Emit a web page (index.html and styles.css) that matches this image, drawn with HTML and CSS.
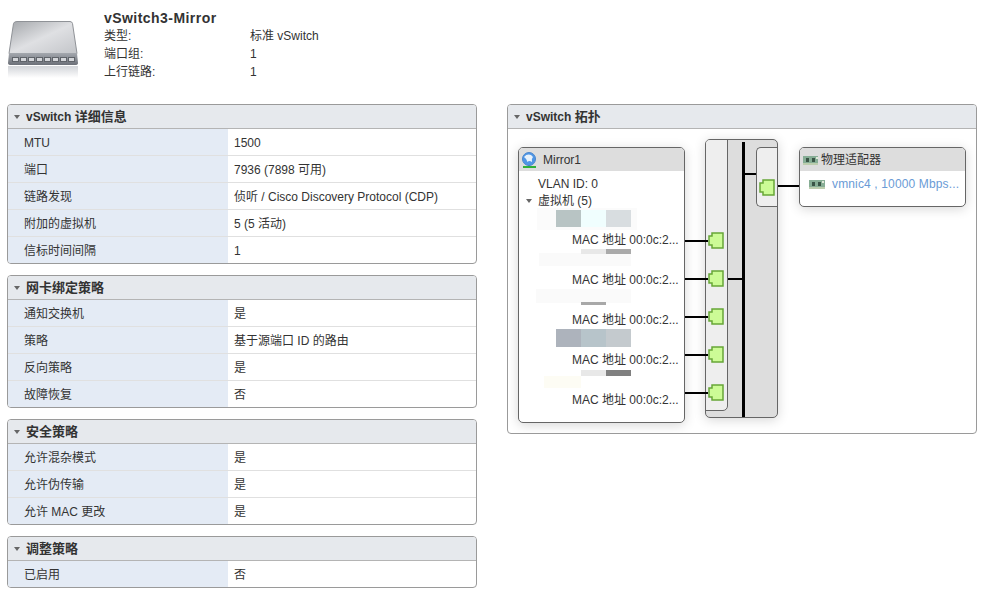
FILE: index.html
```html
<!DOCTYPE html>
<html lang="zh">
<head>
<meta charset="utf-8">
<title>vSwitch3-Mirror</title>
<link rel="stylesheet" href="styles.css">
</head>
<body>
<svg width="0" height="0" class="defs">
  <defs>
    <g id="port">
      <path d="M4 1H15V16H4V13H1V4H4Z" fill="#ccfb96" stroke="#67a637" stroke-width="1.500"/>
    </g>
    <g id="nic">
      <rect x="0" y="1" width="16" height="9" fill="#86ad95"/>
      <rect x="0" y="8" width="16" height="2" fill="#bccdae"/>
      <rect x="3" y="3" width="3" height="4" fill="#3a5546"/>
      <rect x="9" y="3" width="3" height="4" fill="#3a5546"/>
      <rect x="13" y="2" width="2" height="2" fill="#dfe8d8"/>
    </g>
  </defs>
</svg>
<header class="summary">
  <svg class="switch-icon" width="70" height="58" viewBox="0 0 70 58">
    <defs>
      <linearGradient id="top" x1="0" y1="0" x2="1" y2="1">
        <stop offset="0" stop-color="#a3a6aa"/>
        <stop offset=".5" stop-color="#dfe0e3"/>
        <stop offset="1" stop-color="#c3c5c9"/>
      </linearGradient>
      <linearGradient id="band" x1="0" y1="0" x2="0" y2="1">
        <stop offset="0" stop-color="#a4a8ae"/>
        <stop offset="1" stop-color="#6c7078"/>
      </linearGradient>
      <linearGradient id="refl" x1="0" y1="0" x2="0" y2="1">
        <stop offset="0" stop-color="#d2d5d9"/>
        <stop offset="1" stop-color="#ffffff"/>
      </linearGradient>
    </defs>
    <path d="M9 1.500H62Q64 1.500 64.500 3.500L69 33.500H1L5.500 3.500Q6 1.500 9 1.500Z" fill="url(#top)" stroke="#8f9297"/>
    <path d="M1 33H69L70 43Q70 45 67 45H3Q0 45 0 43Z" fill="url(#band)"/>
    <g fill="#d4d6da" stroke="#60646a">
      <rect x="4.500" y="37.500" width="6" height="4"/><rect x="12.500" y="37.500" width="6" height="4"/>
      <rect x="20.500" y="37.500" width="6" height="4"/><rect x="28.500" y="37.500" width="6" height="4"/>
      <rect x="36.500" y="37.500" width="6" height="4"/><rect x="44.500" y="37.500" width="6" height="4"/>
      <rect x="52.500" y="37.500" width="6" height="4"/><rect x="60.500" y="37.500" width="6" height="4"/>
    </g>
    <rect x="0" y="46" width="70" height="12" fill="url(#refl)"/>
  </svg>
  <div class="summary-text">
    <h1>vSwitch3-Mirror</h1>
    <dl class="facts">
      <dt>类型:</dt><dd>标准 vSwitch</dd>
      <dt>端口组:</dt><dd>1</dd>
      <dt>上行链路:</dt><dd>1</dd>
    </dl>
  </div>
</header>
<main class="columns">
  <div class="column">
    <section class="panel">
      <h2 class="panel-head"><i class="caret"></i>vSwitch&nbsp;<span class="zh">详细信息</span></h2>
      <div class="row"><span class="key">MTU</span><span class="val">1500</span></div>
      <div class="row"><span class="key">端口</span><span class="val">7936 (7898 可用)</span></div>
      <div class="row"><span class="key">链路发现</span><span class="val">侦听 / Cisco Discovery Protocol (CDP)</span></div>
      <div class="row"><span class="key">附加的虚拟机</span><span class="val">5 (5 活动)</span></div>
      <div class="row"><span class="key">信标时间间隔</span><span class="val">1</span></div>
    </section>
    <section class="panel">
      <h2 class="panel-head"><i class="caret"></i><span class="zh">网卡绑定策略</span></h2>
      <div class="row"><span class="key">通知交换机</span><span class="val">是</span></div>
      <div class="row"><span class="key">策略</span><span class="val">基于源端口 ID 的路由</span></div>
      <div class="row"><span class="key">反向策略</span><span class="val">是</span></div>
      <div class="row"><span class="key">故障恢复</span><span class="val">否</span></div>
    </section>
    <section class="panel">
      <h2 class="panel-head"><i class="caret"></i><span class="zh">安全策略</span></h2>
      <div class="row"><span class="key">允许混杂模式</span><span class="val">是</span></div>
      <div class="row"><span class="key">允许伪传输</span><span class="val">是</span></div>
      <div class="row"><span class="key">允许 MAC 更改</span><span class="val">是</span></div>
    </section>
    <section class="panel">
      <h2 class="panel-head"><i class="caret"></i><span class="zh">调整策略</span></h2>
      <div class="row"><span class="key">已启用</span><span class="val">否</span></div>
    </section>
  </div>
  <div class="column">
    <section class="panel">
      <h2 class="panel-head"><i class="caret"></i>vSwitch&nbsp;<span class="zh">拓扑</span></h2>
      <div class="canvas">
        <div class="card portgroup">
          <div class="card-head">
            <svg class="globe" width="16" height="16" viewBox="0 0 16 16">
              <rect x="7" y="12" width="2" height="3" fill="#556"/>
              <circle cx="8" cy="7" r="6.500" fill="#4f96e6" stroke="#4a86cc"/>
              <path d="M3 5Q6 1.500 10 3L12 5Q10 7 11 10Q8 8 6.500 10Q6 7 3 5Z" fill="#e6f1fb"/>
              <rect x="2" y="14" width="13" height="2" fill="#2fb03a"/>
            </svg>
            <span>Mirror1</span>
          </div>
          <div class="card-body">
            <div class="vlan">VLAN ID: 0</div>
            <div class="vm-title"><i class="caret"></i>虚拟机 (5)</div>
            <div class="vm"><span class="mac">MAC 地址 00:0c:2...</span></div>
            <div class="vm"><span class="mac">MAC 地址 00:0c:2...</span></div>
            <div class="vm"><span class="mac">MAC 地址 00:0c:2...</span></div>
            <div class="vm"><span class="mac">MAC 地址 00:0c:2...</span></div>
            <div class="vm"><span class="mac">MAC 地址 00:0c:2...</span></div>
          </div>
          <i class="smudge s1d"></i>
          <i class="smudge s1a"></i><i class="smudge s1b"></i><i class="smudge s1c"></i>
          <i class="smudge s2c"></i><i class="smudge s2a"></i><i class="smudge s2b"></i>
          <i class="smudge s3a"></i><i class="smudge s3b"></i>
          <i class="smudge s4a"></i><i class="smudge s4b"></i><i class="smudge s4c"></i>
          <i class="smudge s5a"></i><i class="smudge s5b"></i><i class="smudge s5c"></i>
        </div>
        <div class="vswitch">
          <div class="strip">
            <svg class="port" width="16" height="17"><use href="#port"/></svg>
            <svg class="port trunk" width="16" height="17"><use href="#port"/></svg>
            <svg class="port" width="16" height="17"><use href="#port"/></svg>
            <svg class="port" width="16" height="17"><use href="#port"/></svg>
            <svg class="port" width="16" height="17"><use href="#port"/></svg>
          </div>
          <i class="bus"></i>
          <i class="link-left"></i>
          <i class="link-right"></i>
          <div class="uplink"><svg width="16" height="17"><use href="#port"/></svg></div>
        </div>
        <i class="wire w1"></i><i class="wire w2"></i><i class="wire w3"></i><i class="wire w4"></i><i class="wire w5"></i>
        <i class="wire w6"></i>
        <div class="card adapter">
          <div class="card-head">
            <svg width="15" height="10"><use href="#nic"/></svg>
            <span>物理适配器</span>
          </div>
          <div class="nic-row">
            <svg width="16" height="10"><use href="#nic"/></svg>
            <span class="nic-name">vmnic4 , 10000 Mbps...</span>
          </div>
        </div>
      </div>
    </section>
  </div>
</main>
</body>
</html>
```
FILE: styles.css
```css
* { box-sizing: border-box; }
html, body { margin: 0; padding: 0; background: #fff; }
body {
  width: 984px;
  height: 594px;
  overflow: hidden;
  font: 12px/18px "Liberation Sans", "Noto Sans CJK SC", sans-serif;
  color: #333;
}
.defs { position: absolute; }
.summary {
  height: 104px;
  display: flex;
  padding: 20px 0 0 8px;
}
.switch-icon { flex: none; }
.summary-text { margin: -11px 0 0 26px; }
h1 {
  margin: 0;
  font-size: 14px;
  font-weight: bold;
  line-height: 18px;
  letter-spacing: .45px;
  color: #333;
}
.facts {
  margin: 0;
  display: grid;
  grid-template-columns: 146px auto;
  grid-auto-rows: 18px;
}
.facts dt, .facts dd { margin: 0; }
.columns {
  display: flex;
  gap: 30px;
  padding-left: 7px;
  align-items: flex-start;
}
.column {
  width: 470px;
  display: flex;
  flex-direction: column;
  gap: 11px;
}
.panel {
  border: 1px solid #9a9a9a;
  border-radius: 4px;
  overflow: hidden;
  background: #fff;
}
.panel-head {
  margin: 0;
  height: 24px;
  display: flex;
  align-items: center;
  padding: 1px 0 0 6px;
  background: #e6e9ed;
  border-bottom: 1px solid #b4b4b4;
  font-size: 12px;
  font-weight: bold;
  color: #333;
}
.zh { font-size: 13px; }
.caret {
  flex: none;
  width: 0;
  height: 0;
  margin-right: 6px;
  border: 3.5px solid transparent;
  border-top: 4px solid #666;
  border-bottom: 0;
}
.row {
  height: 27px;
  display: grid;
  grid-template-columns: 220px 1fr;
  border-bottom: 1px solid #e0e0e0;
}
.row:last-child { height: 26px; border-bottom: 0; }
.key, .val { display: flex; align-items: center; padding-top: 1px; }
.key { background: #e4ebf5; padding-left: 16px; }
.val { padding-left: 6px; }

.canvas {
  position: relative;
  height: 304px;
}
.card {
  position: absolute;
  background: #fff;
  border: 1px solid #666;
  border-radius: 5px;
  box-shadow: 0 2px 12px rgba(0, 0, 0, .16);
  overflow: hidden;
}
.card-head {
  height: 23px;
  padding-top: 1px;
  display: flex;
  align-items: center;
  background: #ddd;
}
.portgroup { left: 10px; top: 18px; width: 167px; height: 276px; }
.portgroup .card-head { padding-left: 2px; gap: 6px; }
.globe { flex: none; }
.card-body { padding-left: 19px; }
.vlan { height: 17px; margin-top: 4px; }
.vm-title { height: 18px; margin-bottom: -1px; display: flex; align-items: center; margin-left: -12px; }
.vm-title .caret { margin-right: 6px; }
.vm { height: 40px; display: flex; align-items: flex-end; padding-left: 34px; white-space: nowrap; }
.smudge { position: absolute; filter: blur(.6px); }
.s1d { left: 18px; top: 60px; width: 100px; height: 22px; background: #fbfbfb; }
.s1a { left: 37px; top: 62px; width: 25px; height: 17px; background: #b8c4c4; }
.s1b { left: 62px; top: 62px; width: 25px; height: 17px; background: #f0fefe; }
.s1c { left: 87px; top: 62px; width: 25px; height: 17px; background: #d8dde0; }
.s2a { left: 62px; top: 101px; width: 25px; height: 5px; background: #e8e8e8; }
.s2b { left: 87px; top: 101px; width: 25px; height: 5px; background: #aaa; }
.s2c { left: 20px; top: 105px; width: 92px; height: 13px; background: #fafafa; }
.s3a { left: 17px; top: 141px; width: 95px; height: 14px; background: #fafafa; }
.s3b { left: 62px; top: 154px; width: 25px; height: 3px; background: #a8a8a8; }
.s4a { left: 37px; top: 181px; width: 25px; height: 18px; background: #adb3bc; }
.s4b { left: 62px; top: 181px; width: 25px; height: 18px; background: #b7c4ca; }
.s4c { left: 87px; top: 181px; width: 25px; height: 18px; background: #c4cace; }
.s5a { left: 62px; top: 222px; width: 25px; height: 6px; background: #e8e8e8; }
.s5b { left: 87px; top: 222px; width: 25px; height: 6px; background: #808080; }
.s5c { left: 25px; top: 228px; width: 37px; height: 12px; background: #fdfcf4; }

.vswitch {
  position: absolute;
  left: 197px;
  top: 10px;
  width: 73px;
  height: 279px;
  background: #ddd;
  border: 1px solid #666;
  border-radius: 5px;
  box-shadow: 0 2px 12px rgba(0, 0, 0, .16);
  overflow: hidden;
}
.strip {
  position: absolute;
  left: -1px;
  top: -1px;
  width: 23px;
  height: 272px;
  padding: 92px 0 0 2px;
  display: flex;
  flex-direction: column;
  gap: 21px;
  background: #eee;
  border: 1px solid #666;
  border-radius: 0 0 5px 0;
}
.strip .port { flex: none; }
.bus {
  position: absolute;
  left: 36px;
  top: 2px;
  width: 3px;
  height: 275px;
  background: #000;
}
.link-left {
  position: absolute;
  left: 22px;
  top: 138px;
  width: 15px;
  height: 2px;
  background: #000;
}
.link-right {
  position: absolute;
  left: 38px;
  top: 33px;
  width: 13px;
  height: 2px;
  background: #000;
}
.uplink {
  position: absolute;
  left: 50px;
  top: 7px;
  width: 23px;
  height: 60px;
  padding: 31px 0 0 2px;
  background: #eee;
  border: 1px solid #666;
  border-right: 0;
  border-radius: 5px 0 0 5px;
}
.uplink svg { display: block; }
.wire {
  position: absolute;
  height: 2px;
  background: #000;
  left: 177px;
  width: 23px;
}
.w1 { top: 111px; }
.w2 { top: 149px; }
.w3 { top: 187px; }
.w4 { top: 225px; }
.w5 { top: 263px; }
.w6 { left: 270px; width: 21px; top: 56px; }
.adapter { left: 291px; top: 18px; width: 167px; height: 60px; }
.adapter .card-head { padding-left: 3px; gap: 3px; }
.nic-row {
  display: flex;
  align-items: center;
  height: 25px;
  padding-left: 9px;
  gap: 7px;
  white-space: nowrap;
  letter-spacing: .14px;
  color: #6a9bd6;
}
```
